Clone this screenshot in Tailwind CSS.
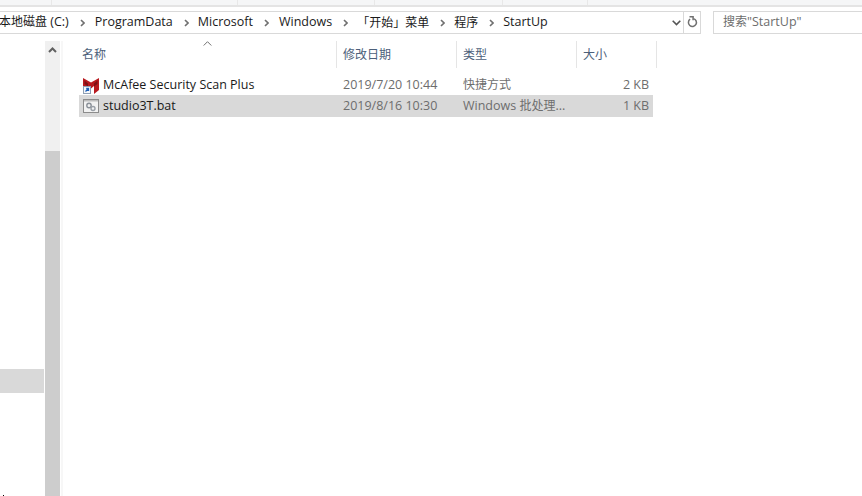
<!DOCTYPE html>
<html lang="zh-CN">
<head>
  <meta charset="UTF-8" />
  <title>StartUp</title>
  <script src="https://cdn.jsdelivr.net/npm/@tailwindcss/browser@4"></script>
</head>
<body class="bg-white overflow-hidden">
  <div class="relative w-[862px] h-[496px] flex flex-col overflow-hidden text-[12.5px] text-[#1a1a1a] font-['Open_Sans','Noto_Sans_CJK_SC',sans-serif]">

    <!-- ribbon remainder -->
    <div class="h-[7px] shrink-0 bg-[#f5f6f7] border-b-2 border-[#e4e4e4] flex">
      <div class="w-[52px] border-r border-[#e8e8e8]"></div>
      <div class="w-[186px] border-r border-[#e8e8e8]"></div>
      <div class="w-[137px] border-r border-[#e8e8e8]"></div>
      <div class="w-[128px] border-r border-[#e8e8e8]"></div>
      <div class="w-[85px] border-r border-[#e8e8e8]"></div>
    </div>

    <!-- address + search -->
    <div class="h-[23px] mt-[4px] shrink-0 flex">
      <div class="w-[701px] border-y border-r border-[#d9d9d9] flex items-center justify-between">
        <div class="flex items-center whitespace-nowrap -ml-px">
          <span><span class="text-[12px]">本地磁盘</span> (C:)</span>
          <svg class="w-[5px] h-[8px] ml-[11px] mr-[10px]" viewBox="0 0 5 8" fill="none" stroke="#707070" stroke-width="1.6"><path d="M1 1l3 3-3 3" /></svg>
          <span>ProgramData</span>
          <svg class="w-[5px] h-[8px] ml-[11px] mr-[9px]" viewBox="0 0 5 8" fill="none" stroke="#707070" stroke-width="1.6"><path d="M1 1l3 3-3 3" /></svg>
          <span>Microsoft</span>
          <svg class="w-[5px] h-[8px] ml-[11px] mr-[10px]" viewBox="0 0 5 8" fill="none" stroke="#707070" stroke-width="1.6"><path d="M1 1l3 3-3 3" /></svg>
          <span>Windows</span>
          <svg class="w-[5px] h-[8px] ml-[11px] mr-[9px]" viewBox="0 0 5 8" fill="none" stroke="#707070" stroke-width="1.6"><path d="M1 1l3 3-3 3" /></svg>
          <span class="text-[12px]">「开始」菜单</span>
          <svg class="w-[5px] h-[8px] ml-[11px] mr-[9px]" viewBox="0 0 5 8" fill="none" stroke="#707070" stroke-width="1.6"><path d="M1 1l3 3-3 3" /></svg>
          <span class="text-[12px]">程序</span>
          <svg class="w-[5px] h-[8px] ml-[11px] mr-[9px]" viewBox="0 0 5 8" fill="none" stroke="#707070" stroke-width="1.6"><path d="M1 1l3 3-3 3" /></svg>
          <span>StartUp</span>
        </div>
        <div class="flex items-center h-full">
          <svg class="w-[9px] h-[6px] mr-[2px]" viewBox="0 0 9 6" fill="none" stroke="#555" stroke-width="1.6"><path d="M.7 .8l3.8 3.8 3.8-3.8" /></svg>
          <div class="w-[17px] h-full border-l border-[#d9d9d9] flex items-center justify-center">
            <svg class="w-[11px] h-[13px]" viewBox="0 0 11 13" fill="none" stroke="#707070" stroke-width="1.5"><path d="M6.5 2.6a4 4 0 1 1-3.4 .6" /><path d="M2.5 .8h3.6v3.4" /></svg>
          </div>
        </div>
      </div>
      <div class="w-[149px] ml-[12px] border-y border-l border-[#d9d9d9] pl-[9px] flex items-center text-[#6d6d6d] whitespace-nowrap"><span><span class="text-[12px]">搜索</span>"StartUp"</span></div>
    </div>

    <!-- main -->
    <div class="flex-1 flex mt-[7px] min-h-0">
      <!-- nav pane -->
      <div class="w-[44px] shrink-0 pt-[328px]">
        <div class="h-[24px] bg-[#d9d9d9]"></div>
      </div>

      <!-- nav scrollbar -->
      <div class="w-[15px] ml-px shrink-0 bg-[#f0f0f0] flex flex-col">
        <div class="h-[110px] flex justify-center pt-[6px]">
          <svg class="w-[9px] h-[6px]" viewBox="0 0 9 6" fill="none" stroke="#606060" stroke-width="2"><path d="M1 5l3.5-3.5L8 5" /></svg>
        </div>
        <div class="flex-1 w-[15px] bg-[#cdcdcd]"></div>
      </div>
      <div class="w-[2px] ml-[1px] shrink-0 bg-[#f7f7f7]"></div>

      <!-- file list -->
      <div class="ml-[16px] w-[578px] shrink-0 flex flex-col">
        <div class="h-[27px] flex text-[12px] text-[#4c607a] relative">
          <svg class="absolute left-[124px] top-0 w-[9px] h-[5px]" viewBox="0 0 9 5" fill="none" stroke="#707070"><path d="M.7 4.5l3.8-3.8 3.8 3.8" /></svg>
          <div class="w-[258px] pl-[3px] flex items-center border-r border-[#e5e5e5]">名称</div>
          <div class="w-[120px] pl-[6px] flex items-center border-r border-[#e5e5e5]">修改日期</div>
          <div class="w-[120px] pl-[6px] flex items-center border-r border-[#e5e5e5]">类型</div>
          <div class="w-[80px] pl-[6px] flex items-center border-r border-[#e5e5e5]">大小</div>
        </div>

        <div class="h-[20px] mt-[7px] flex items-center">
          <div class="w-[258px] pl-[4px] flex items-center gap-[4px]">
            <svg class="w-[16px] h-[17px] shrink-0" viewBox="0 0 16 17">
              <path d="M0 1l8 4.5L16 1v12l-5 4V9L8 11.5 5 9v3H0z" fill="#b81a1f" />
              <path d="M1.5 3.5L5 6.5v3L1.5 7zM14.5 3.5L11 6.5v3l3.5-2.5z" fill="#7c1216" />
              <rect x=".5" y="9.5" width="7" height="7" fill="#f5f7fa" stroke="#8fa0b4" />
              <path d="M2.5 14.5l2.5-2.5M3.2 11.5H5.5V14" fill="none" stroke="#1c5fb8" stroke-width="1.3" />
            </svg>
            <span class="whitespace-nowrap">McAfee Security Scan Plus</span>
          </div>
          <div class="w-[120px] pl-[6px] text-[#6d6d6d]">2019/7/20 10:44</div>
          <div class="w-[120px] pl-[6px] text-[12px] text-[#6d6d6d]">快捷方式</div>
          <div class="w-[72px] text-right text-[#6d6d6d]">2 KB</div>
        </div>

        <div class="h-[22px] flex items-center bg-[#d9d9d9] w-[574px]">
          <div class="w-[258px] pl-[4px] flex items-center gap-[4px]">
            <svg class="w-[16px] h-[14px] shrink-0" viewBox="0 0 16 14">
              <rect x=".5" y=".5" width="15" height="13" fill="#f2f2f2" stroke="#8c8c8c" />
              <path d="M1 1h14v1.5H1z" fill="#bdbdbd" />
              <circle cx="6" cy="6.5" r="2.2" fill="none" stroke="#8a9098" stroke-width="1.4" />
              <circle cx="10" cy="9.5" r="2" fill="none" stroke="#9aa0a8" stroke-width="1.4" />
            </svg>
            <span class="whitespace-nowrap">studio3T.bat</span>
          </div>
          <div class="w-[120px] pl-[6px] text-[#6d6d6d]">2019/8/16 10:30</div>
          <div class="w-[120px] pl-[6px] text-[#6d6d6d] whitespace-nowrap">Windows <span class="text-[12px]">批处理</span>...</div>
          <div class="w-[72px] text-right text-[#6d6d6d]">1 KB</div>
        </div>
      </div>
    </div>

    <!-- stray pixel at the bottom edge -->
    <div class="absolute left-[3px] bottom-0 w-px h-px bg-black"></div>
  </div>
</body>
</html>
